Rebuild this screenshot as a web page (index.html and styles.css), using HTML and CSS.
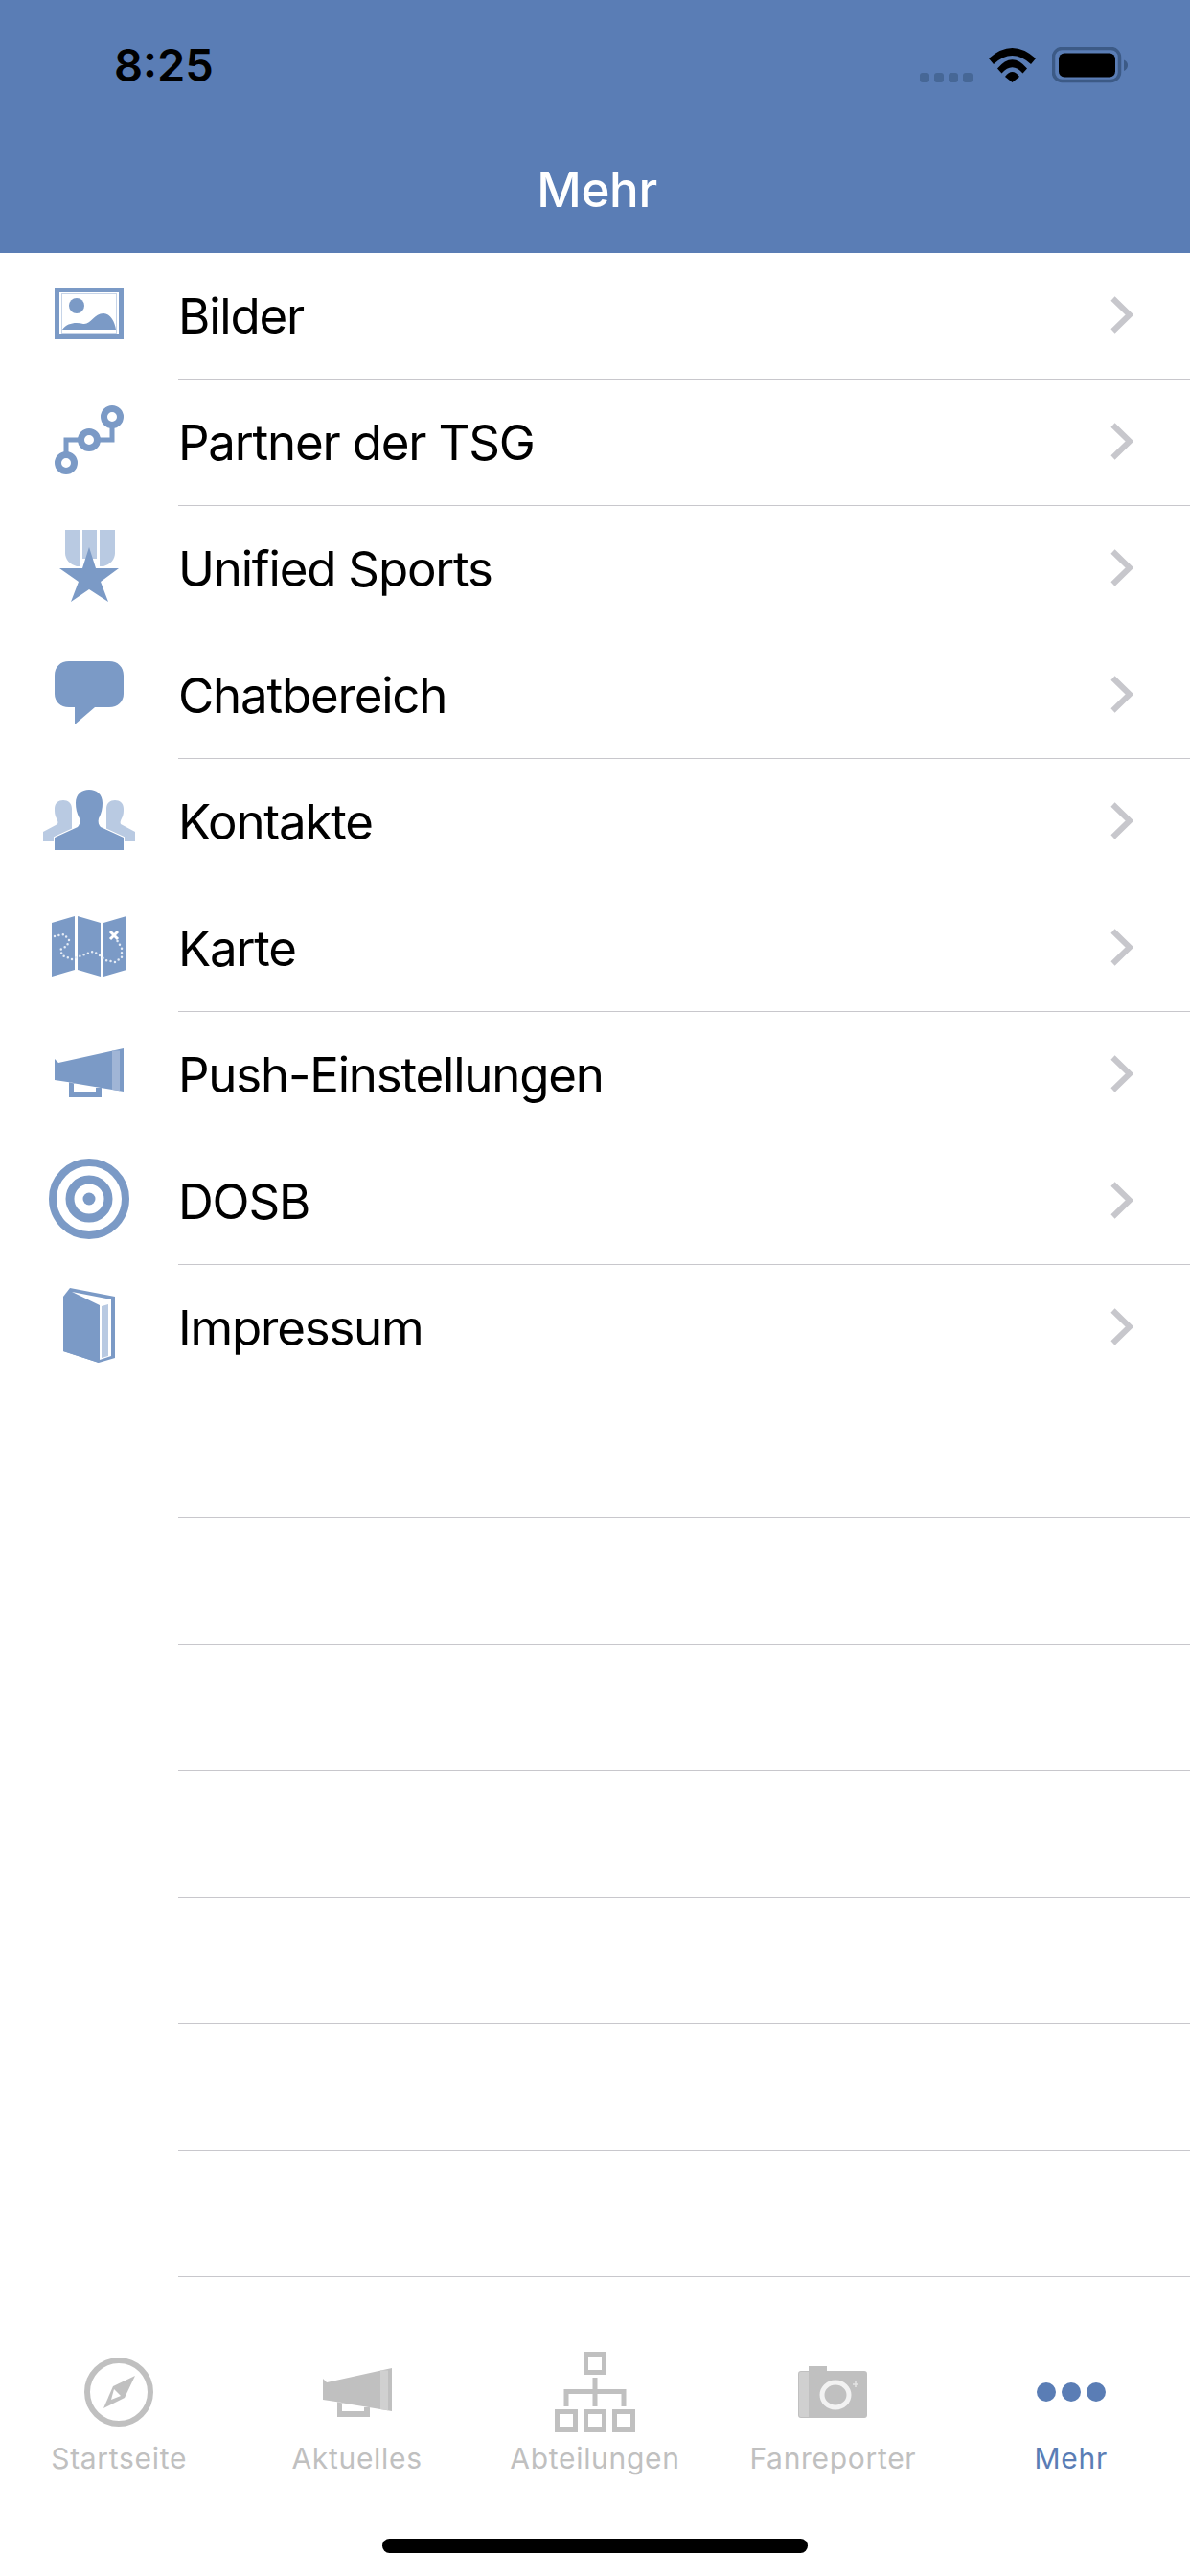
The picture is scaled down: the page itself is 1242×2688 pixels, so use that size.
FILE: index.html
```html
<!DOCTYPE html>
<html lang="de">
<head>
<meta charset="utf-8">
<title>Mehr</title>
<link rel="stylesheet" href="styles.css">
</head>
<body>
<div class="app">
  <header class="header">
    <div class="status">
      <span class="time">8:25</span>
      <div class="status-icons">
        <div class="signal"><i></i><i></i><i></i><i></i></div>
        <svg class="wifi" width="49" height="36" viewBox="0 0 49 36"><path d="M0 11Q24.5-11 49 11L44 17Q24.5-1 5 17Z"/><path d="M9 21.500Q24.500 3 40 21.500L35.500 26.500Q24.500 14 13.500 26.500Z"/><path d="M17 30Q24.500 20 32 30L24.500 36Z"/></svg>
        <svg class="battery" width="79" height="38" viewBox="0 0 79 38"><rect class="bat-frame" x="1.500" y="1.500" width="69" height="34" rx="9"/><rect x="7" y="6.500" width="59" height="25" rx="6"/><path class="bat-tip" d="M75 13.500Q79 15 79 19Q79 23 75 25Z"/></svg>
      </div>
    </div>
    <h1 class="title">Mehr</h1>
  </header>

  <main class="list">
    <a class="row">
      <span class="row-icon"><svg width="72" height="54" viewBox="0 0 72 54"><path class="fill" fill-rule="evenodd" d="M0 0H72V54H0ZM5 5V49H67V5Z"/><rect class="fine" x="7.500" y="6.500" width="57" height="41"/><circle class="fill" cx="23" cy="19" r="8"/><path class="fill" d="M8 44C13 37 22 36 30 38C38 39 41 27 51 27C58 27 63 36 64 44Z"/></svg></span>
      <span class="row-body"><span class="row-label">Bilder</span><svg class="chev" width="23" height="39" viewBox="0 0 23 39"><path d="M2.500 2.500L20 19.500L2.500 36.500"/></svg></span>
    </a>
    <a class="row">
      <span class="row-icon"><svg width="72" height="72" viewBox="0 0 72 72"><g class="line"><circle cx="12" cy="60" r="8.500"/><circle cx="36" cy="36" r="8.500"/><circle cx="60" cy="12" r="8.500"/><path d="M12 50V36H26M46 36H60V22"/></g></svg></span>
      <span class="row-body"><span class="row-label">Partner der TSG</span><svg class="chev" width="23" height="39" viewBox="0 0 23 39"><path d="M2.500 2.500L20 19.500L2.500 36.500"/></svg></span>
    </a>
    <a class="row">
      <span class="row-icon"><svg width="62" height="76" viewBox="0 0 62 76"><path class="soft" d="M6 0H21V38H18C11 36 6 31 6 24Z"/><path class="soft" d="M24 0H39V30H24Z"/><path class="soft" d="M42 0H58V24C58 31 53 36 46 38H42Z"/><path class="fill" d="M31 18L38 40H62L43 54L51 75L31 62L12 75L20 54L0 40H24Z"/></svg></span>
      <span class="row-body"><span class="row-label">Unified Sports</span><svg class="chev" width="23" height="39" viewBox="0 0 23 39"><path d="M2.500 2.500L20 19.500L2.500 36.500"/></svg></span>
    </a>
    <a class="row">
      <span class="row-icon"><svg width="72" height="66" viewBox="0 0 72 66"><path class="fill" d="M15 0H57C66 0 72 6 72 15V34C72 42 66 48 57 48H42L21 66V48H15C6 48 0 42 0 34V15C0 6 6 0 15 0Z"/></svg></span>
      <span class="row-body"><span class="row-label">Chatbereich</span><svg class="chev" width="23" height="39" viewBox="0 0 23 39"><path d="M2.500 2.500L20 19.500L2.500 36.500"/></svg></span>
    </a>
    <a class="row">
      <span class="row-icon"><svg width="96" height="63" viewBox="0 0 96 63"><path class="soft" d="M0 54V44L15 36C16 34 15 32 14 30C12 27 12 23 12 20C12 14 16 11 21 11C26 11 30 14 30 20V54Z"/><path class="soft" d="M96 54V44L81 36C80 34 81 32 82 30C84 27 84 23 84 20C84 14 80 11 75 11C70 11 66 14 66 20V54Z"/><path class="person" d="M12 63V50L36 39C38 37 39 34 38 30C35 25 34 19 34 14C34 5 40 0 48 0C56 0 62 5 62 14C62 19 61 25 58 30C57 34 58 37 60 39L84 50V63Z"/></svg></span>
      <span class="row-body"><span class="row-label">Kontakte</span><svg class="chev" width="23" height="39" viewBox="0 0 23 39"><path d="M2.500 2.500L20 19.500L2.500 36.500"/></svg></span>
    </a>
    <a class="row">
      <span class="row-icon"><svg width="78" height="63" viewBox="0 0 78 63"><path class="fill" d="M0 7L24 0V56L0 63Z"/><path class="fill" d="M27 0L51 7V63L27 56Z"/><path class="fill" d="M54 7L78 0V56L54 63Z"/><path class="dots" d="M3 21L13 19L18 25L16 31L9 35L11 41L21 45L31 41L43 37L49 40L56 46L66 48L73 43L73 33L68 25"/><path class="mark" d="M61 16L69 24M69 16L61 24"/></svg></span>
      <span class="row-body"><span class="row-label">Karte</span><svg class="chev" width="23" height="39" viewBox="0 0 23 39"><path d="M2.500 2.500L20 19.500L2.500 36.500"/></svg></span>
    </a>
    <a class="row">
      <span class="row-icon"><svg width="72" height="51" viewBox="0 0 72 51"><path class="fill" d="M0 11L4 15L72 0V45L15 35.500V51H49V41H43V45H20V36L0 33Z"/><path class="band" d="M60 2.500H68V44.300L60 43Z"/></svg></span>
      <span class="row-body"><span class="row-label">Push-Einstellungen</span><svg class="chev" width="23" height="39" viewBox="0 0 23 39"><path d="M2.500 2.500L20 19.500L2.500 36.500"/></svg></span>
    </a>
    <a class="row">
      <span class="row-icon"><svg width="84" height="84" viewBox="0 0 84 84"><g class="ring"><circle cx="42" cy="42" r="38"/><circle cx="42" cy="42" r="20"/></g><circle class="fill" cx="42" cy="42" r="6.500"/></svg></span>
      <span class="row-body"><span class="row-label">DOSB</span><svg class="chev" width="23" height="39" viewBox="0 0 23 39"><path d="M2.500 2.500L20 19.500L2.500 36.500"/></svg></span>
    </a>
    <a class="row">
      <span class="row-icon"><svg width="54" height="78" viewBox="0 0 54 78"><path class="fill" d="M0 9L7 0L54 9V73L37 78L0 66Z"/><path class="blank" d="M9 4L50 12V71L38 75V18Z"/><path class="soft" d="M40 19L47 17V71L40 73Z"/><path class="fill" d="M0 9L37 19V78L0 66Z"/></svg></span>
      <span class="row-body"><span class="row-label">Impressum</span><svg class="chev" width="23" height="39" viewBox="0 0 23 39"><path d="M2.500 2.500L20 19.500L2.500 36.500"/></svg></span>
    </a>
    <div class="row row-empty"><span class="row-icon"></span><span class="row-body"></span></div>
    <div class="row row-empty"><span class="row-icon"></span><span class="row-body"></span></div>
    <div class="row row-empty"><span class="row-icon"></span><span class="row-body"></span></div>
    <div class="row row-empty"><span class="row-icon"></span><span class="row-body"></span></div>
    <div class="row row-empty"><span class="row-icon"></span><span class="row-body"></span></div>
    <div class="row row-empty"><span class="row-icon"></span><span class="row-body"></span></div>
    <div class="row row-empty"><span class="row-icon"></span><span class="row-body"></span></div>
  </main>

  <nav class="tabs">
    <a class="tab">
      <span class="tab-icon"><svg width="72" height="72" viewBox="0 0 72 72"><circle class="tab-ring" cx="36" cy="36" r="33"/><path class="tab-fill" d="M53 19L42 42L20 53L30 30Z"/><path class="tab-hole" d="M31 33L38 40L28 44Z"/></svg></span>
      <span class="tab-label">Startseite</span>
    </a>
    <a class="tab">
      <span class="tab-icon"><svg width="72" height="51" viewBox="0 0 72 51"><path class="tab-fill" d="M0 11L4 15L72 0V45L15 35.500V51H49V41H43V45H20V36L0 33Z"/><path class="tab-band" d="M60 2.500H68V44.300L60 43Z"/></svg></span>
      <span class="tab-label">Aktuelles</span>
    </a>
    <a class="tab">
      <span class="tab-icon"><svg width="84" height="84" viewBox="0 0 84 84"><g class="tab-line"><rect x="32.500" y="2.500" width="19" height="19"/><rect x="2.500" y="62.500" width="19" height="19"/><rect x="32.500" y="62.500" width="19" height="19"/><rect x="62.500" y="62.500" width="19" height="19"/><path d="M42 27V57M12 57V41.500H72V57"/></g></svg></span>
      <span class="tab-label">Abteilungen</span>
    </a>
    <a class="tab">
      <span class="tab-icon"><svg width="72" height="54" viewBox="0 0 72 54"><path class="tab-fill" d="M3 5H11V0H30V5H69Q72 5 72 8V51Q72 54 69 54H3Q0 54 0 51V8Q0 5 3 5Z"/><path class="tab-band" d="M3 6H11V53H3Q1 53 1 51V8Q1 6 3 6Z"/><ellipse class="tab-lens" cx="39" cy="30" rx="14" ry="13"/><path class="tab-plus" d="M60 16V22M57 19H63"/></svg></span>
      <span class="tab-label">Fanreporter</span>
    </a>
    <a class="tab tab-active">
      <span class="tab-icon"><span class="more"><i></i><i></i><i></i></span></span>
      <span class="tab-label">Mehr</span>
    </a>
  </nav>
  <div class="home-bar"></div>
</div>
</body>
</html>
```

FILE: styles.css
```css
* { box-sizing: border-box; }
html, body { margin: 0; padding: 0; background: #fff; }
body { font-family: Inter, "Liberation Sans", sans-serif; color: #000; }

.app { position: relative; width: 1242px; height: 2688px; display: flex; flex-direction: column; overflow: hidden; background: #fff; }

.header { height: 264px; flex: none; background: #5a7db5; display: flex; flex-direction: column; }
.status { height: 132px; display: flex; justify-content: space-between; align-items: flex-start; padding: 49px 65px 0 119px; }
.time { font-size: 47px; font-weight: 600; line-height: 38px; letter-spacing: 0; }
.status-icons { display: flex; align-items: flex-end; height: 37px; }
.signal { display: flex; gap: 5px; margin-right: 17px; }
.signal i { width: 10px; height: 10px; border-radius: 3px; background: #466796; }
.wifi { margin-right: 17px; display: block; }
.battery { display: block; margin-bottom: -1px; }
.bat-frame { fill: none; stroke: #3c5a86; stroke-width: 3.5; }
.bat-tip { fill: #3c5a86; }

.title { height: 132px; margin: 0; padding-left: 4px; font-size: 51px; font-weight: 500; line-height: 132px; letter-spacing: -0.3px; text-align: center; color: #fff; }

.list { flex: none; height: 2112px; display: flex; flex-direction: column; }
.row { height: 132px; flex: none; display: flex; }
.row-icon { width: 186px; flex: none; display: flex; align-items: center; justify-content: center; padding-bottom: 6px; }
.row-icon svg { display: block; }
.row-body { flex: 1; display: flex; align-items: center; justify-content: space-between; border-bottom: 1px solid #c8c7cc; padding: 0 60px 0 0; }
.row-label { font-size: 51px; line-height: 60px; letter-spacing: -1.2px; }
.chev { display: block; margin-bottom: 2px; }
.chev path { fill: none; stroke: #c7c7cc; stroke-width: 6; }

.fill { fill: #7b9ac6; }
.soft { fill: #b9cae2; }
.fine { fill: none; stroke: #c6d4e8; stroke-width: 1; }
.line circle, .line path { fill: none; stroke: #7b9ac6; }
.line circle { stroke-width: 7; }
.line path { stroke-width: 5; }
.person { fill: #7b9ac6; stroke: #fff; stroke-width: 2; paint-order: stroke; }
.dots { fill: none; stroke: #e4ebf5; stroke-width: 2.500; stroke-linecap: round; stroke-dasharray: 0 4.500; }
.mark { fill: none; stroke: #fff; stroke-width: 3; }
.band { fill: #a0b5d6; }
.ring circle { fill: none; stroke: #7b9ac6; }
.ring circle:first-child { stroke-width: 8; }
.ring circle:last-child { stroke-width: 9; }
.blank { fill: #fff; }

.tabs { flex: 1; display: grid; grid-template-columns: repeat(5, 1fr); padding-top: 78px; background: #fff; }
.tab { display: flex; flex-direction: column; align-items: center; }
.tab-icon { height: 84px; display: flex; align-items: center; justify-content: center; }
.tab-icon svg { display: block; }
.tab-label { margin-top: 9px; font-size: 30px; line-height: 36px; color: #c0c0c0; letter-spacing: 0.7px; }
.tab-active .tab-label { color: #5a7db5; }
.tab-ring { fill: none; stroke: #c0c0c0; stroke-width: 6; }
.tab-fill { fill: #c0c0c0; }
.tab-hole { fill: #fff; }
.tab-band { fill: #d0d0d0; }
.tab-line rect, .tab-line path { fill: none; stroke: #c0c0c0; stroke-width: 5; }
.tab-lens { fill: none; stroke: #f2f2f2; stroke-width: 5; }
.tab-plus { fill: none; stroke: #e4e4e4; stroke-width: 1.500; }
.more { display: flex; gap: 6px; }
.more i { width: 20px; height: 20px; border-radius: 50%; background: #5a7db5; }

.home-bar { position: absolute; left: 399px; top: 2649px; width: 444px; height: 15px; border-radius: 8px; background: #000; }
```
